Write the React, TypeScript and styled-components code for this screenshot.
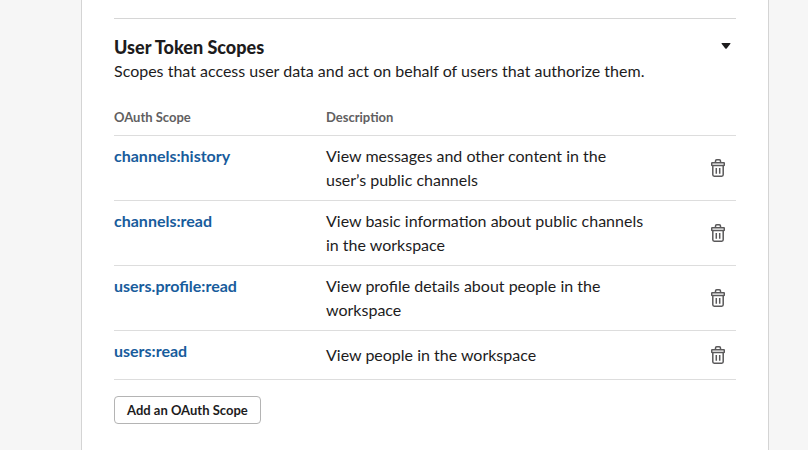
import React, { useState } from "react";
import styled, { createGlobalStyle } from "styled-components";

const GlobalStyle = createGlobalStyle`
  *, *::before, *::after { box-sizing: border-box; }
  body {
    margin: 0;
    background: #f6f6f6;
    color: #1d1c1d;
    font-family: Lato, "Liberation Sans", sans-serif;
    font-size: 16px;
    line-height: 24px;
    font-variant-ligatures: common-ligatures;
  }
`;

const Page = styled.div`
  display: flex;
  min-height: 100vh;
  padding: 0 39px 0 81px;
`;

const Card = styled.main`
  flex: 1;
  min-width: 0;
  padding: 18px 32px 26px;
  background: #fff;
  border: solid #d4d4d4;
  border-width: 0 1px;
`;

const Section = styled.section`
  padding-top: 16px;
  border-top: 1px solid #d6d6d6;
`;

const SectionHeader = styled.header`
  display: flex;
  justify-content: space-between;
  align-items: flex-start;
  margin-bottom: 24px;
`;

const Title = styled.h2`
  margin: 0;
  font-size: 18px;
  line-height: 24px;
  font-weight: 900;
`;

const Intro = styled.p`
  margin: 0;
`;

const IconButton = styled.button`
  display: inline-flex;
  align-items: center;
  justify-content: center;
  padding: 0;
  border: 0;
  background: none;
  color: #5a595a;
  cursor: pointer;
`;

const ToggleButton = styled(IconButton)`
  width: 20px;
  height: 22px;
  color: #1d1c1d;
`;

const DeleteButton = styled(IconButton)`
  width: 36px;
  height: 32px;
  vertical-align: middle;
`;

const Table = styled.table`
  width: 100%;
  table-layout: fixed;
  border-collapse: separate;
  border-spacing: 0;
`;

const HeadCell = styled.th<{ $width?: string }>`
  width: ${(p) => p.$width ?? "auto"};
  padding: 0 0 8px;
  border-bottom: 1px solid #dddddd;
  color: #616061;
  font-size: 13px;
  line-height: 20px;
  font-weight: 700;
  text-align: left;
`;

const ScopeCell = styled.td`
  padding: 8px 0;
  border-bottom: 1px solid #dddddd;
  vertical-align: top;
`;

const DescriptionCell = styled.td`
  padding: 8px 52px 8px 0;
  border-bottom: 1px solid #dddddd;
  vertical-align: middle;
`;

const ActionCell = styled.td`
  padding: 8px 0;
  border-bottom: 1px solid #dddddd;
  vertical-align: middle;
  line-height: 0;
`;

const ScopeLink = styled.a`
  color: #185c9c;
  font-weight: 700;
  text-decoration: none;

  &:hover { text-decoration: underline; }
`;

const AddButton = styled.button`
  height: 28px;
  margin-top: 16px;
  padding: 0 12px;
  border: 1px solid #b4b4b4;
  border-radius: 4px;
  background: #fff;
  color: #1d1c1d;
  font-family: inherit;
  font-size: 13px;
  line-height: 20px;
  font-weight: 700;
  cursor: pointer;
`;

const CaretIcon = () => (
  <svg width="10" height="6" viewBox="0 0 10 6" aria-hidden="true">
    <path d="M1 0h8q.8.1.4.8L5.7 5.5q-.7.7-1.4 0L.6.8Q.2.1 1 0z" fill="currentColor" />
  </svg>
);

const TrashIcon = () => (
  <svg
    width="14"
    height="18"
    viewBox="0 0 14 18"
    fill="none"
    stroke="currentColor"
    strokeWidth="1.5"
    strokeLinejoin="round"
    aria-hidden="true"
  >
    <path d="M4.500 3.600V2q0-1.200 1.200-1.200h2.600Q9.500.8 9.500 2v1.600" />
    <rect x="0.700" y="3.700" width="12.600" height="2.900" rx="0.500" />
    <path d="M1.800 6.600v9.200q0 1.400 1.400 1.400h7.600q1.400 0 1.400-1.400V6.600" />
    <path d="M5.300 9v5.800M8.700 9v5.800" />
  </svg>
);

const scopes = [
  { name: "channels:history", description: "View messages and other content in the user’s public channels" },
  { name: "channels:read", description: "View basic information about public channels in the workspace" },
  { name: "users.profile:read", description: "View profile details about people in the workspace" },
  { name: "users:read", description: "View people in the workspace" },
];

export default function App() {
  const [open, setOpen] = useState(true);

  return (
    <>
      <GlobalStyle />
      <Page>
        <Card>
          <Section>
            <SectionHeader>
              <div>
                <Title>User Token Scopes</Title>
                <Intro>Scopes that access user data and act on behalf of users that authorize them.</Intro>
              </div>
              <ToggleButton
                type="button"
                aria-label="Toggle User Token Scopes"
                aria-expanded={open}
                onClick={() => setOpen(!open)}
              >
                <CaretIcon />
              </ToggleButton>
            </SectionHeader>
            {open && (
              <>
                <Table>
                  <thead>
                    <tr>
                      <HeadCell scope="col" $width="212px">OAuth Scope</HeadCell>
                      <HeadCell scope="col">Description</HeadCell>
                      <HeadCell $width="36px" />
                    </tr>
                  </thead>
                  <tbody>
                    {scopes.map((scope) => (
                      <tr key={scope.name}>
                        <ScopeCell>
                          <ScopeLink href={`#${scope.name}`}>{scope.name}</ScopeLink>
                        </ScopeCell>
                        <DescriptionCell>{scope.description}</DescriptionCell>
                        <ActionCell>
                          <DeleteButton type="button" aria-label={`Delete ${scope.name}`}>
                            <TrashIcon />
                          </DeleteButton>
                        </ActionCell>
                      </tr>
                    ))}
                  </tbody>
                </Table>
                <AddButton type="button">Add an OAuth Scope</AddButton>
              </>
            )}
          </Section>
        </Card>
      </Page>
    </>
  );
}
